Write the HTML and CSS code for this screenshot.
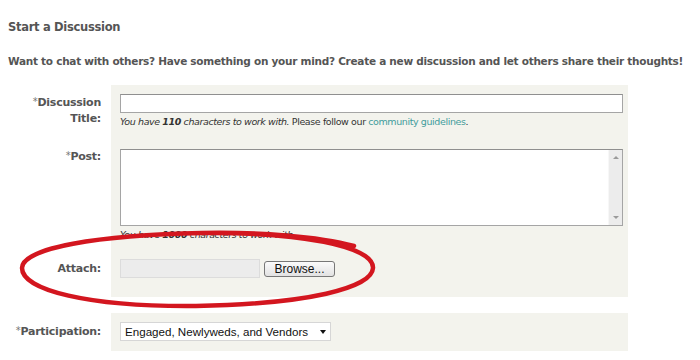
FILE: index.html
```html
<!DOCTYPE html>
<html lang="en">
<head>
  <meta charset="UTF-8">
  <meta name="viewport" content="width=device-width, initial-scale=1.0">
  <title>Start a Discussion</title>
  <link rel="stylesheet" href="styles.css">
</head>
<body>

  <div class="page">

    <h2 class="page-title">Start a Discussion</h2>
    <p class="intro">Want to chat with others? Have something on your mind? Create a new discussion and let others share their thoughts!</p>

    <div class="form-block">

      <div class="form-row row-title">
        <label class="form-label"><span class="req">*</span>Discussion Title:</label>
        <div class="form-cell">
          <input type="text" class="text-input">
          <p class="hint">You have <b>110</b> characters to work with. <span class="plain">Please follow our <a href="#">community guidelines</a>.</span></p>
        </div>
      </div>

      <div class="form-row row-post">
        <label class="form-label"><span class="req">*</span>Post:</label>
        <div class="form-cell">
          <div class="post-box">
            <textarea class="post-text"></textarea>
            <div class="scrollbar">
              <span class="arrow-up"></span>
              <span class="arrow-down"></span>
            </div>
          </div>
          <p class="hint">You have <b>1000</b> characters to work with.</p>
        </div>
      </div>

      <div class="form-row row-attach">
        <label class="form-label">Attach:</label>
        <div class="form-cell file-cell">
          <span class="file-name"></span>
          <button class="browse-btn">Browse...</button>
        </div>
      </div>

    </div>

    <div class="form-block block-participation">
      <div class="form-row row-part">
        <label class="form-label"><span class="req">*</span>Participation:</label>
        <div class="form-cell">
          <div class="select-wrap">
            <select class="select">
              <option>Engaged, Newlyweds, and Vendors</option>
            </select>
          </div>
        </div>
      </div>
    </div>

    <!-- hand drawn circle around the attach row -->
    <svg class="scribble" width="364" height="84" viewBox="0 0 364 84">
      <path d="M184 5 C280 4 356 18 355 40 C354 60 290 76 178 78 C70 79 4 62 4 40 C4 20 80 7 184 5 C240 4 300 8 336 18"
            fill="none" stroke="#d3161f" stroke-width="4.5" stroke-linecap="round"/>
    </svg>

  </div>

</body>
</html>
```

FILE: styles.css
```css
body{
  margin: 0;
  background-color: #ffffff;
  font-family: "DejaVu Sans", Verdana, sans-serif;
  color: #555555;
}
.page{
  position: relative;
  padding: 19px 8px 0 8px;
}
.page-title{
  margin: 0;
  font-size: 11.5px;
  font-weight: bold;
  letter-spacing: -0.3px;
  line-height: 16px;
}
.intro{
  margin: 18px 0 0 0;
  font-size: 10.5px;
  font-weight: bold;
  letter-spacing: -0.27px;
  line-height: 16px;
  white-space: nowrap;
}
.form-block{
  margin-top: 16px;
  width: 620px;
}
.block-participation{
  margin-top: 16px;
}
.form-row{
  display: flex;
}
.form-label{
  width: 93px;
  flex: none;
  padding-right: 10px;
  text-align: right;
  font-size: 11px;
  font-weight: bold;
  letter-spacing: -0.25px;
  line-height: 16px;
  color: #555555;
}
.req{
  font-weight: normal;
  font-size: 10px;
  color: #777777;
  position: relative;
  top: -1px;
}
.form-cell{
  flex: 1;
  background-color: #f3f3ed;
  padding-left: 9px;
  padding-right: 5px;
}
.row-title .form-cell{
  padding-top: 9px;
  height: 45px;
}
.row-title .form-label{
  padding-top: 10px;
}
.text-input{
  display: block;
  box-sizing: border-box;
  width: 503px;
  height: 19px;
  margin: 0;
  border: 1px solid #a5a5a5;
  border-top-color: #8f8f8f;
  background: #ffffff;
}
.hint{
  margin: 2px 0 0 0;
  font-size: 9.5px;
  font-style: italic;
  letter-spacing: -0.4px;
  line-height: 14px;
  color: #333333;
}
.hint b{
  font-weight: bold;
}
.hint .plain{
  font-style: normal;
}
.hint a{
  color: #3f9c9c;
  text-decoration: none;
}
.row-post .form-cell{
  padding-top: 10px;
  height: 100px;
}
.row-post .form-label{
  padding-top: 10px;
}
.post-box{
  display: flex;
  box-sizing: border-box;
  width: 503px;
  height: 77px;
  border: 1px solid #a5a5a5;
  border-top-color: #8f8f8f;
  background: #ffffff;
}
.post-text{
  flex: 1;
  border: none;
  margin: 0;
  resize: none;
  outline: none;
}
.scrollbar{
  width: 14px;
  display: flex;
  flex-direction: column;
  justify-content: space-between;
  align-items: center;
  background-color: #ececec;
  border-left: 1px solid #f7f7f7;
  padding: 6px 0;
  box-sizing: border-box;
}
.arrow-up{
  width: 0;
  height: 0;
  border-left: 3px solid transparent;
  border-right: 3px solid transparent;
  border-bottom: 3px solid #9a9a9a;
}
.arrow-down{
  width: 0;
  height: 0;
  border-left: 3px solid transparent;
  border-right: 3px solid transparent;
  border-top: 3px solid #9a9a9a;
}
.row-attach .form-cell{
  height: 48px;
}
.row-attach .form-label{
  padding-top: 12px;
}
.file-cell{
  display: flex;
  align-items: flex-start;
  padding-top: 10px;
  box-sizing: border-box;
}
.file-name{
  display: block;
  box-sizing: border-box;
  width: 140px;
  height: 19px;
  background-color: #ececec;
  border: 1px solid #dcdcdc;
}
.browse-btn{
  margin: 2px 0 0 4px;
  box-sizing: border-box;
  width: 71px;
  height: 16px;
  padding: 0;
  border: 1px solid #777777;
  border-radius: 3px;
  background: linear-gradient(#fbfbfb, #e2e2e2);
  font-family: "Liberation Sans", Arial, sans-serif;
  font-size: 12px;
  line-height: 14px;
  color: #111111;
}
.row-part .form-cell{
  height: 38px;
  padding-top: 9px;
  box-sizing: border-box;
}
.row-part .form-label{
  padding-top: 11px;
}
.select-wrap{
  position: relative;
  width: 211px;
}
.select{
  -webkit-appearance: none;
  appearance: none;
  display: block;
  box-sizing: border-box;
  width: 211px;
  height: 19px;
  margin: 0;
  padding: 0 0 0 4px;
  border: 1px solid #d6d6d6;
  border-radius: 0;
  background: #ffffff;
  font-family: "Liberation Sans", Arial, sans-serif;
  font-size: 11.6px;
  color: #111111;
}
.select-wrap::after{
  content: "";
  position: absolute;
  right: 5px;
  top: 8px;
  border-left: 3px solid transparent;
  border-right: 3px solid transparent;
  border-top: 4px solid #111111;
}
.scribble{
  position: absolute;
  left: 18px;
  top: 228px;
  pointer-events: none;
}
```
